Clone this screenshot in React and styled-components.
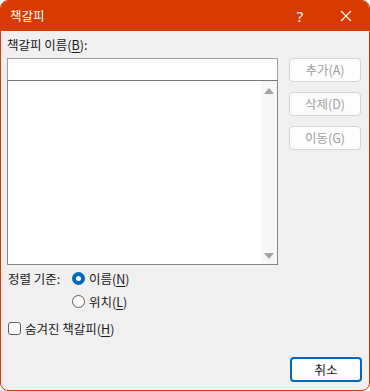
import styled, { createGlobalStyle } from 'styled-components';

const GlobalStyle = createGlobalStyle`
  html, body {
    margin: 0;
    padding: 0;
    background: #ffffff;
  }
  * {
    box-sizing: border-box;
  }
`;

const Window = styled.div`
  width: 370px;
  height: 391px;
  border: 1px solid #d83b01;
  border-radius: 8px;
  overflow: hidden;
  display: flex;
  flex-direction: column;
  background: #f0f0f0;
  font-family: "Noto Sans CJK KR", "Noto Sans", sans-serif;
  font-size: 12.5px;
  color: #1a1a1a;
`;

const TitleBar = styled.div`
  height: 30px;
  flex-shrink: 0;
  background: #d83b01;
  color: #ffffff;
  display: flex;
  align-items: center;
  padding-left: 9px;
`;

const Title = styled.span`
  flex: 1;
  font-size: 12.5px;
  padding-bottom: 1px;
`;

const TitleButton = styled.div`
  width: 46px;
  height: 30px;
  display: flex;
  align-items: center;
  justify-content: center;
  font-family: "Noto Sans", sans-serif;
  font-size: 15px;
`;

const Body = styled.div`
  flex: 1;
  display: flex;
  flex-direction: column;
  padding: 5px 7px 8px 6px;
`;

const Top = styled.div`
  display: flex;
  gap: 11px;
`;

const LeftCol = styled.div`
  width: 271px;
  display: flex;
  flex-direction: column;
`;

const Label = styled.div`
  height: 22px;
  line-height: 18px;
`;

const Mnemonic = styled.span`
  text-decoration: underline;
  text-underline-offset: 2px;
`;

const TextInput = styled.div`
  height: 23px;
  background: #ffffff;
  border: 1px solid #a0a0a0;
  border-bottom-color: #7a7a7a;
`;

const ListBox = styled.div`
  height: 184px;
  background: #ffffff;
  border: 1px solid #828790;
  border-top: none;
  display: flex;
  justify-content: flex-end;
`;

const ScrollBar = styled.div`
  width: 16px;
  background: #f6f6f6;
  display: flex;
  flex-direction: column;
  justify-content: space-between;
  align-items: center;
  padding: 7px 0 5px;
`;

const Arrow = styled.div`
  width: 0;
  height: 0;
  border-left: 5px solid transparent;
  border-right: 5px solid transparent;
  ${(p) =>
    p.$down
      ? 'border-top: 6px solid #a3a3a3;'
      : 'border-bottom: 6px solid #a3a3a3;'}
`;

const ButtonCol = styled.div`
  padding-top: 22px;
  display: flex;
  flex-direction: column;
  gap: 10px;
`;

const Button = styled.div`
  width: 72px;
  height: 24px;
  border-radius: 4px;
  display: flex;
  align-items: center;
  justify-content: center;
  background: #fdfdfd;
  border: ${(p) => (p.$primary ? '2px solid #0067c0' : '1px solid #d4d4d4')};
  color: ${(p) => (p.$disabled ? '#a0a0a0' : '#1a1a1a')};
  padding-bottom: 1px;
`;

const SortSection = styled.div`
  display: flex;
  margin-top: 2px;
`;

const SortLabel = styled.div`
  width: 65px;
  height: 23px;
  line-height: 23px;
  padding-left: 1px;
`;

const RadioGroup = styled.div`
  display: flex;
  flex-direction: column;
`;

const OptionRow = styled.div`
  height: 23px;
  display: flex;
  align-items: center;
  gap: 4px;
`;

const Radio = styled.div`
  width: 13px;
  height: 13px;
  border-radius: 50%;
  display: flex;
  align-items: center;
  justify-content: center;
  background: ${(p) => (p.$checked ? '#0067c0' : '#ffffff')};
  border: ${(p) => (p.$checked ? 'none' : '1px solid #5c5c5c')};
  &::after {
    content: '';
    display: ${(p) => (p.$checked ? 'block' : 'none')};
    width: 5px;
    height: 5px;
    border-radius: 50%;
    background: #ffffff;
  }
`;

const CheckRow = styled(OptionRow)`
  margin-top: 4px;
  padding-left: 1px;
`;

const Checkbox = styled.div`
  width: 13px;
  height: 13px;
  border: 1px solid #5c5c5c;
  border-radius: 3px;
  background: #ffffff;
`;

const Footer = styled.div`
  margin-top: auto;
  display: flex;
  justify-content: flex-end;
`;

const CancelButton = styled(Button)`
  height: 25px;
`;

function CloseIcon() {
  return (
    <svg width="12" height="12" viewBox="0 0 12 12">
      <path d="M1 1 L11 11 M11 1 L1 11" stroke="#ffffff" strokeWidth="1.1" />
    </svg>
  );
}

export default function App() {
  return (
    <>
      <GlobalStyle />
      <Window>
        <TitleBar>
          <Title>책갈피</Title>
          <TitleButton>?</TitleButton>
          <TitleButton>
            <CloseIcon />
          </TitleButton>
        </TitleBar>
        <Body>
          <Top>
            <LeftCol>
              <Label>
                책갈피 이름(<Mnemonic>B</Mnemonic>):
              </Label>
              <TextInput />
              <ListBox>
                <ScrollBar>
                  <Arrow />
                  <Arrow $down />
                </ScrollBar>
              </ListBox>
            </LeftCol>
            <ButtonCol>
              <Button $disabled>추가(A)</Button>
              <Button $disabled>삭제(D)</Button>
              <Button $disabled>이동(G)</Button>
            </ButtonCol>
          </Top>
          <SortSection>
            <SortLabel>정렬 기준:</SortLabel>
            <RadioGroup>
              <OptionRow>
                <Radio $checked />
                <span>
                  이름(<Mnemonic>N</Mnemonic>)
                </span>
              </OptionRow>
              <OptionRow>
                <Radio />
                <span>
                  위치(<Mnemonic>L</Mnemonic>)
                </span>
              </OptionRow>
            </RadioGroup>
          </SortSection>
          <CheckRow>
            <Checkbox />
            <span>
              숨겨진 책갈피(<Mnemonic>H</Mnemonic>)
            </span>
          </CheckRow>
          <Footer>
            <CancelButton $primary>취소</CancelButton>
          </Footer>
        </Body>
      </Window>
    </>
  );
}
